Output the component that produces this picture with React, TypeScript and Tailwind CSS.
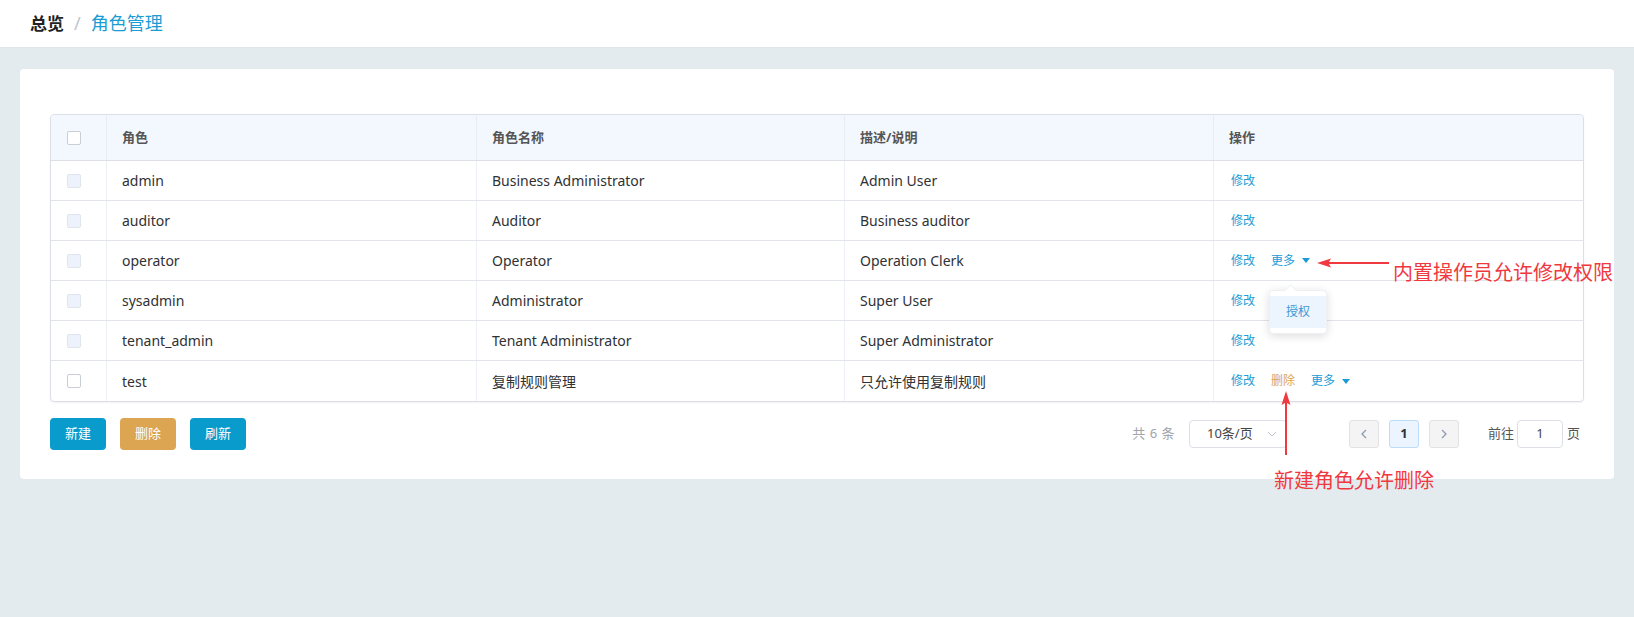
import React from 'react';

type Role = {
  code: string;
  name: string;
  desc: string;
  locked: boolean;
  actions: ('edit' | 'more' | 'delete')[];
};

const roles: Role[] = [
  { code: 'admin', name: 'Business Administrator', desc: 'Admin User', locked: true, actions: ['edit'] },
  { code: 'auditor', name: 'Auditor', desc: 'Business auditor', locked: true, actions: ['edit'] },
  { code: 'operator', name: 'Operator', desc: 'Operation Clerk', locked: true, actions: ['edit', 'more'] },
  { code: 'sysadmin', name: 'Administrator', desc: 'Super User', locked: true, actions: ['edit'] },
  { code: 'tenant_admin', name: 'Tenant Administrator', desc: 'Super Administrator', locked: true, actions: ['edit'] },
  { code: 'test', name: '复制规则管理', desc: '只允许使用复制规则', locked: false, actions: ['edit', 'delete', 'more'] },
];

const cols = 'grid grid-cols-[56px_370px_368px_369px_1fr]';

const Checkbox: React.FC<{ disabled?: boolean }> = ({ disabled }) => (
  <span
    className={`block w-[14px] h-[14px] rounded-[2px] border ${
      disabled ? 'bg-[#edf2fc] border-[#dfe4ed]' : 'bg-white border-[#c9ced6]'
    }`}
  />
);

const Caret = () => (
  <svg width="8" height="5" viewBox="0 0 8 5" className="ml-[7px]">
    <path d="M0 0h8L4 5z" fill="#1b9bd7" />
  </svg>
);

const App: React.FC = () => {
  return (
    <div className="min-h-[617px] bg-[#e4ebee] font-['Noto_Sans','Noto_Sans_CJK_SC',sans-serif] text-[#303133]">
      <div className="h-12 bg-white flex items-center px-[30px] border-b border-[#e0e6e9]">
        <span className="text-[17px] font-bold text-[#222]">总览</span>
        <span className="mx-[10px] text-[18px] text-[#c0c4cc]">/</span>
        <span className="text-[18px] text-[#1b9dd4]">角色管理</span>
      </div>

      <div className="px-5 pt-[21px]">
        <div className="relative bg-white rounded-[4px] px-[30px] pt-[45px] pb-[29px]">
          <div className="border border-[#dcdfe6] rounded-[4px] shadow-[0_1px_2px_rgba(0,0,0,0.06)] overflow-hidden">
            <div className={`${cols} h-[46px] bg-[#f3f8fe] border-b border-[#dcdfe6] text-[13px] font-bold text-[#555]`}>
              <div className="flex items-center pl-[16px] border-r border-[#e9edf3]">
                <Checkbox />
              </div>
              <div className="flex items-center px-[15px] border-r border-[#e9edf3]">角色</div>
              <div className="flex items-center px-[15px] border-r border-[#e9edf3]">角色名称</div>
              <div className="flex items-center px-[15px] border-r border-[#e9edf3]">描述/说明</div>
              <div className="flex items-center px-[15px]">操作</div>
            </div>
            {roles.map((r, i) => (
              <div
                key={r.code}
                className={`${cols} h-[40px] text-[14px] ${i < roles.length - 1 ? 'border-b border-[#e1e4ea]' : ''}`}
              >
                <div className="flex items-center pl-[16px] border-r border-[#eceff4]">
                  <Checkbox disabled={r.locked} />
                </div>
                <div className="flex items-center px-[15px] border-r border-[#eceff4]">{r.code}</div>
                <div className="flex items-center px-[15px] border-r border-[#eceff4]">{r.name}</div>
                <div className="flex items-center px-[15px] border-r border-[#eceff4]">{r.desc}</div>
                <div className="flex items-center pl-[17px] text-[12px] gap-[16px]">
                  {r.actions.map((a) =>
                    a === 'edit' ? (
                      <span key={a} className="text-[#1b9bd7]">修改</span>
                    ) : a === 'delete' ? (
                      <span key={a} className="text-[#dba553]">删除</span>
                    ) : (
                      <span key={a} className="flex items-center text-[#1b9bd7]">
                        更多
                        <Caret />
                      </span>
                    )
                  )}
                </div>
              </div>
            ))}
          </div>

          <div className="flex items-center mt-[16px]">
            <div className="flex gap-[14px] text-[13px] text-white">
              <button className="w-[56px] h-[32px] rounded-[4px] bg-[#0a9bcd]">新建</button>
              <button className="w-[56px] h-[32px] rounded-[4px] bg-[#dba552]">删除</button>
              <button className="w-[56px] h-[32px] rounded-[4px] bg-[#0a9bcd]">刷新</button>
            </div>
            <div className="ml-auto flex items-center text-[13px] mr-[4px]">
              <span className="text-[#a0a4ab] tracking-[0.5px]">共 6 条</span>
              <div className="ml-[14px] w-[98px] h-[28px] border border-[#dcdfe6] rounded-[4px] flex items-center pl-[17px] pr-[9px] text-[#444]">
                <span>10条/页</span>
                <svg width="10" height="6" viewBox="0 0 10 6" className="ml-auto">
                  <path d="M1 1l4 4 4-4" fill="none" stroke="#c0c4cc" strokeWidth="1" />
                </svg>
              </div>
              <div className="ml-[62px] flex gap-[10px]">
                <span className="w-[30px] h-[28px] rounded-[3px] border border-[#e2e2e4] bg-[#f4f4f5] flex items-center justify-center">
                  <svg width="6" height="10" viewBox="0 0 6 10">
                    <path d="M5 1L1 5l4 4" fill="none" stroke="#8c9bb0" strokeWidth="1.3" />
                  </svg>
                </span>
                <span className="w-[30px] h-[28px] rounded-[3px] border border-[#bcdcf9] bg-[#ecf5ff] flex items-center justify-center font-bold text-[#333]">
                  1
                </span>
                <span className="w-[30px] h-[28px] rounded-[3px] border border-[#e2e2e4] bg-[#f4f4f5] flex items-center justify-center">
                  <svg width="6" height="10" viewBox="0 0 6 10">
                    <path d="M1 1l4 4-4 4" fill="none" stroke="#8c9bb0" strokeWidth="1.3" />
                  </svg>
                </span>
              </div>
              <span className="ml-[29px] text-[#555]">前往</span>
              <span className="ml-[3px] w-[46px] h-[28px] border border-[#dcdfe6] rounded-[4px] flex items-center justify-center text-[#444]">
                1
              </span>
              <span className="ml-[4px] text-[#555]">页</span>
            </div>
          </div>

          {/* dropdown popover for operator row */}
          <div className="absolute left-[1249px] top-[221px] w-[58px] h-[44px] bg-white rounded-[4px] shadow-[0_2px_10px_rgba(0,0,0,0.14)] border border-[#eef0f3] py-[5px]">
            <div className="absolute -top-[5px] left-[16px] w-[9px] h-[9px] bg-white rotate-45 border-l border-t border-[#eef0f3]" />
            <div className="relative h-[32px] bg-[#ecf5fd] flex items-center justify-center text-[12px] text-[#3a98d6]">
              授权
            </div>
          </div>
        </div>
      </div>

      {/* annotations */}
      <div className="absolute left-[1317px] top-[257px] flex items-center">
        <svg width="74" height="12" viewBox="0 0 74 12">
          <path d="M0 6L14 1.5L12 5H72V7H12L14 10.5Z" fill="#f03a3f" />
        </svg>
      </div>
      <div className="absolute left-[1393px] top-[258px] text-[20px] leading-[28px] text-[#f0393f] font-['Noto_Sans_CJK_SC',sans-serif]">
        内置操作员允许修改权限
      </div>
      <div className="absolute left-[1280px] top-[391px]">
        <svg width="12" height="64" viewBox="0 0 12 64">
          <path d="M6 0L10.5 14L7 12V64H5V12L1.5 14Z" fill="#f03a3f" />
        </svg>
      </div>
      <div className="absolute left-[1274px] top-[466px] text-[20px] leading-[28px] text-[#f0393f] font-['Noto_Sans_CJK_SC',sans-serif]">
        新建角色允许删除
      </div>
    </div>
  );
};

export default App;
